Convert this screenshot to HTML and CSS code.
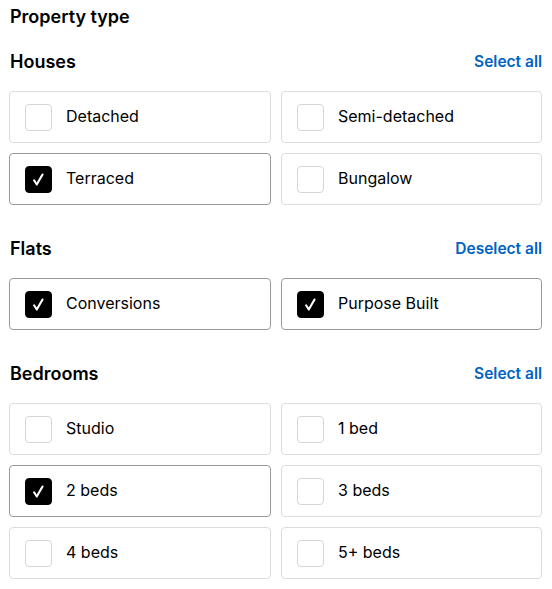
FILE: index.html
```html
<!DOCTYPE html>
<html>
<head>
<meta charset="utf-8">
<link rel="stylesheet" href="styles.css">
</head>
<body>
<div class="page">
  <h1 class="title">Property type</h1>

  <section class="group">
    <div class="group-head"><h2>Houses</h2><a class="link">Select all</a></div>
    <div class="grid">
      <label class="opt"><span class="box"></span><span class="txt">Detached</span></label>
      <label class="opt"><span class="box"></span><span class="txt">Semi-detached</span></label>
      <label class="opt on"><span class="box"><svg viewBox="0 0 26 26"><path d="M8.4 13.8 L11.2 18.2 L17.2 7.8" /></svg></span><span class="txt">Terraced</span></label>
      <label class="opt"><span class="box"></span><span class="txt">Bungalow</span></label>
    </div>
  </section>

  <section class="group">
    <div class="group-head"><h2>Flats</h2><a class="link">Deselect all</a></div>
    <div class="grid">
      <label class="opt on"><span class="box"><svg viewBox="0 0 26 26"><path d="M8.4 13.8 L11.2 18.2 L17.2 7.8" /></svg></span><span class="txt">Conversions</span></label>
      <label class="opt on"><span class="box"><svg viewBox="0 0 26 26"><path d="M8.4 13.8 L11.2 18.2 L17.2 7.8" /></svg></span><span class="txt">Purpose Built</span></label>
    </div>
  </section>

  <section class="group">
    <div class="group-head"><h2>Bedrooms</h2><a class="link">Select all</a></div>
    <div class="grid">
      <label class="opt"><span class="box"></span><span class="txt">Studio</span></label>
      <label class="opt"><span class="box"></span><span class="txt">1 bed</span></label>
      <label class="opt on"><span class="box"><svg viewBox="0 0 26 26"><path d="M8.4 13.8 L11.2 18.2 L17.2 7.8" /></svg></span><span class="txt">2 beds</span></label>
      <label class="opt"><span class="box"></span><span class="txt">3 beds</span></label>
      <label class="opt"><span class="box"></span><span class="txt">4 beds</span></label>
      <label class="opt"><span class="box"></span><span class="txt">5+ beds</span></label>
    </div>
  </section>
</div>
</body>
</html>
```

FILE: styles.css
```css
* { box-sizing: border-box; }
html, body { margin: 0; padding: 0; background: #fff; }
body {
  font-family: Inter, "Noto Sans", sans-serif;
  color: #000;
}
.page {
  width: 533px;
  margin-left: 9px;
  padding-top: 5px;
}
.title {
  margin: 0;
  font-size: 18px;
  font-weight: 600;
  line-height: 24px;
  padding-left: 1px;
}
.group-head {
  display: flex;
  justify-content: space-between;
  align-items: center;
  height: 24px;
}
.group { margin-top: 20px; }
.group + .group { margin-top: 31px; }
.group-head h2 {
  margin: 0;
  font-size: 18px;
  font-weight: 600;
  padding-left: 1px;
}
.link {
  color: #0062c4;
  font-size: 15.5px;
  font-weight: 600;
  cursor: pointer;
}
.grid {
  margin-top: 18px;
  display: grid;
  grid-template-columns: 262px 261px;
  column-gap: 10px;
  row-gap: 10px;
}
.opt {
  height: 52px;
  border: 1px solid #dcdcdc;
  border-radius: 4px;
  display: flex;
  align-items: center;
  padding-left: 15px;
  cursor: pointer;
}
.opt.on { border-color: #9a9a9a; }
.box {
  width: 27px;
  height: 27px;
  border: 1px solid #d6d6d6;
  border-radius: 4px;
  flex: none;
  display: flex;
}
.opt.on .box {
  background: #000;
  border-color: #000;
}
.box svg { width: 100%; height: 100%; }
.box path {
  fill: none;
  stroke: #fff;
  stroke-width: 2.2;
  stroke-linecap: round;
  stroke-linejoin: round;
}
.txt {
  margin-left: 14px;
  font-size: 16px;
  line-height: 20px;
  transform: translateY(-1px);
}
```
